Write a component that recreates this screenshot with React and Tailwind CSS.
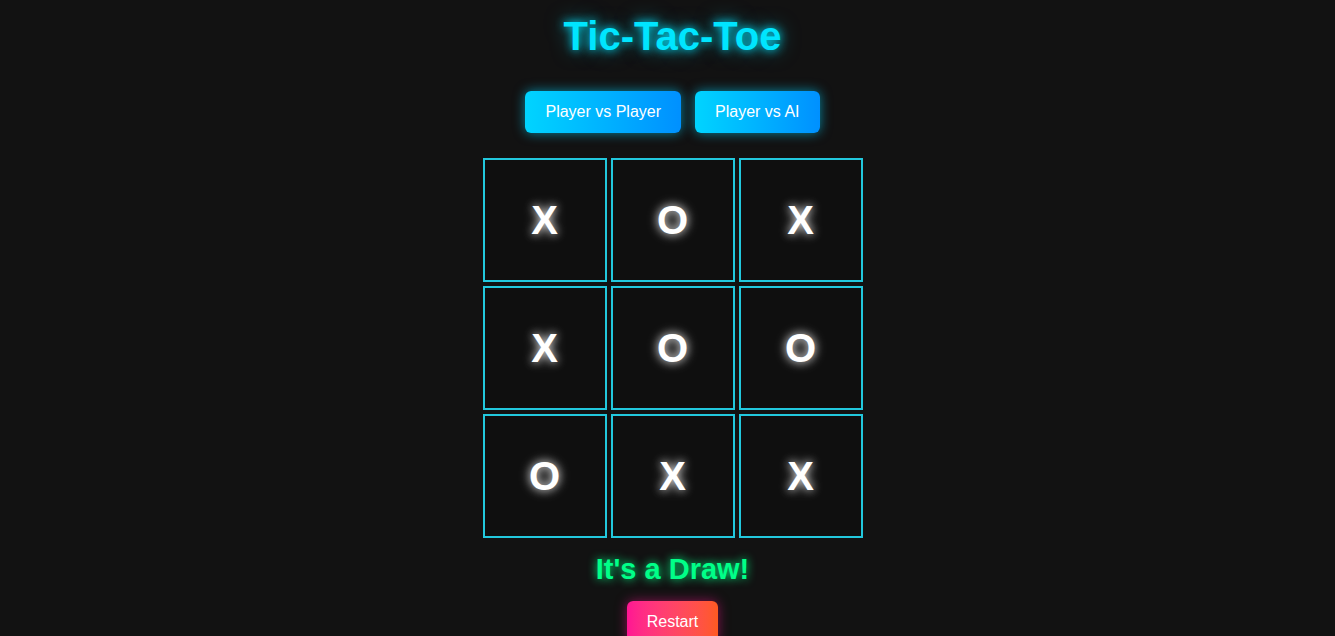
import React, { useState } from 'react';

const initialBoard = ['X', 'O', 'X', 'X', 'O', 'O', 'O', 'X', 'X'];

const App = () => {
    const [board] = useState(initialBoard);
    const [mode, setMode] = useState('pvp');

    return (
        <div className="min-h-screen bg-[#121212] text-white font-['Liberation_Sans',Arial,sans-serif] flex flex-col items-center pl-[10px]">
            {/* Title */}
            <h1 className="mt-[13px] text-[40px] leading-[46px] font-bold text-[#00e5ff] [text-shadow:0_0_10px_#00e5ff,0_0_20px_rgba(0,229,255,0.5)]">
                Tic-Tac-Toe
            </h1>

            {/* Mode buttons */}
            <div className="flex gap-[14px] mt-[32px]">
                <button
                    onClick={() => setMode('pvp')}
                    className="px-5 h-[42px] rounded-md text-base text-white bg-gradient-to-r from-[#00d4ff] to-[#0090ff] shadow-[0_0_12px_rgba(0,212,255,0.6)]"
                >
                    Player vs Player
                </button>
                <button
                    onClick={() => setMode('ai')}
                    className="px-5 h-[42px] rounded-md text-base text-white bg-gradient-to-r from-[#00d4ff] to-[#0090ff] shadow-[0_0_12px_rgba(0,212,255,0.6)]"
                >
                    Player vs AI
                </button>
            </div>

            {/* Board */}
            <div className="grid grid-cols-[repeat(3,124px)] gap-1 mt-[25px]">
                {board.map((cell, i) => (
                    <div
                        key={i}
                        className="h-[124px] w-[124px] border-2 border-[#22c8dd] bg-[#0f0f0f] flex items-center justify-center text-[40px] font-bold text-white [text-shadow:0_0_8px_rgba(255,255,255,0.8),0_0_14px_rgba(255,255,255,0.4)]"
                    >
                        {cell}
                    </div>
                ))}
            </div>

            {/* Status */}
            <p className="mt-[14px] text-[29px] leading-[34px] font-bold text-[#00ff88] [text-shadow:0_0_10px_#00ff88]">
                It's a Draw!
            </p>

            <button className="mt-[15px] px-5 h-[42px] rounded-md text-base text-white bg-gradient-to-r from-[#ff1493] to-[#ff5a1f] shadow-[0_0_12px_rgba(255,20,147,0.5)]">
                Restart
            </button>
        </div>
    );
};

export default App;
